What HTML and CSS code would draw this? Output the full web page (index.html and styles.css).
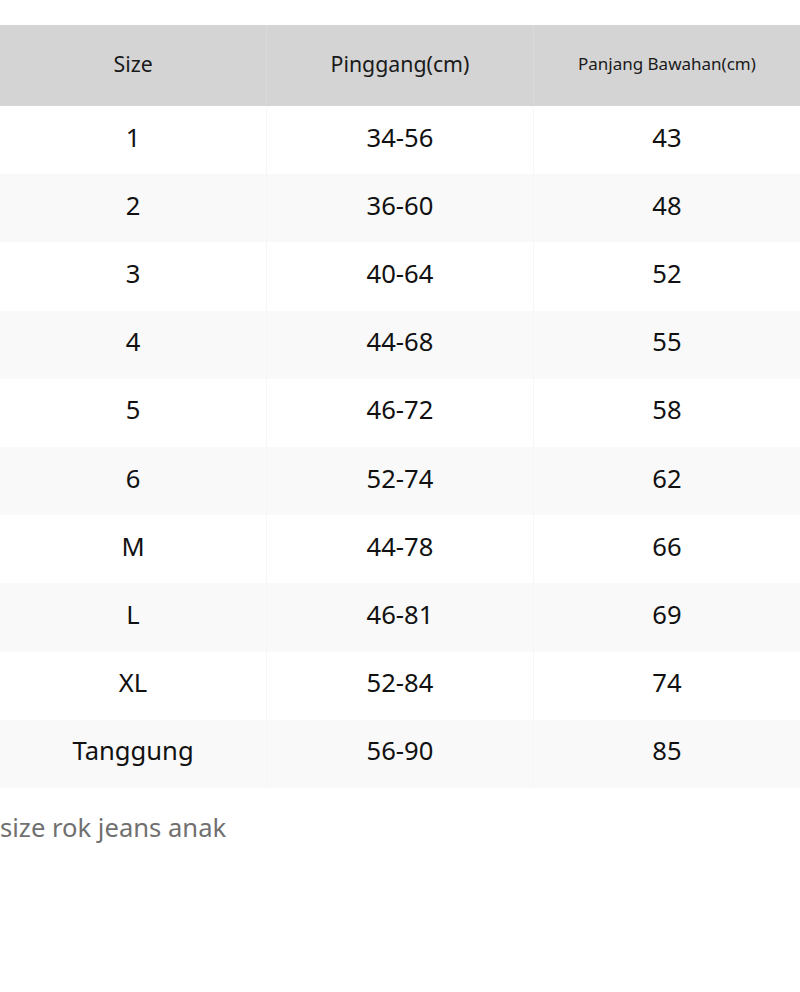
FILE: index.html
```html
<!DOCTYPE html>
<html>
<head>
<meta charset="utf-8">
<link rel="stylesheet" href="styles.css">
</head>
<body>
<div class="wrap">
<table class="size-table">
<thead>
<tr><th>Size</th><th>Pinggang(cm)</th><th class="small">Panjang Bawahan(cm)</th></tr>
</thead>
<tbody>
<tr><td>1</td><td>34-56</td><td>43</td></tr>
<tr><td>2</td><td>36-60</td><td>48</td></tr>
<tr><td>3</td><td>40-64</td><td>52</td></tr>
<tr><td>4</td><td>44-68</td><td>55</td></tr>
<tr><td>5</td><td>46-72</td><td>58</td></tr>
<tr><td>6</td><td>52-74</td><td>62</td></tr>
<tr><td>M</td><td>44-78</td><td>66</td></tr>
<tr><td>L</td><td>46-81</td><td>69</td></tr>
<tr><td>XL</td><td>52-84</td><td>74</td></tr>
<tr><td>Tanggung</td><td>56-90</td><td>85</td></tr>
</tbody>
</table>
<p class="caption">size rok jeans anak</p>
</div>
</body>
</html>
```
FILE: styles.css
```css
html, body {
  margin: 0;
  padding: 0;
  background: #ffffff;
}
body {
  font-family: "Noto Sans", "Open Sans", sans-serif;
  color: #111111;
}
.wrap {
  padding-top: 25px;
}
.size-table {
  width: 800px;
  border-collapse: collapse;
  table-layout: fixed;
}
.size-table th {
  box-sizing: border-box;
  background: #d4d4d4;
  height: 81px;
  font-weight: normal;
  font-size: 21.3px;
  color: #1a1a1a;
  padding: 0 0 4px 0;
  text-align: center;
  border-right: 1px solid #dadada;
}
.size-table th.small {
  font-size: 17px;
}
.size-table th:last-child,
.size-table td:last-child {
  border-right: none;
}
.size-table td {
  box-sizing: border-box;
  height: 68.2px;
  padding: 0 0 6px 0;
  text-align: center;
  font-size: 25.6px;
  color: #111111;
  border-right: 1px solid #f6f6f6;
}
.size-table tbody tr:nth-child(even) td {
  background: #f9f9f9;
}
.caption {
  margin: 21px 0 0 0;
  font-size: 25.6px;
  color: #707070;
  line-height: 38px;
}
```
